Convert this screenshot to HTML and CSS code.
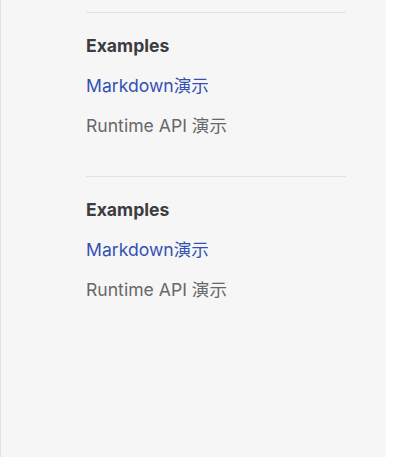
FILE: index.html
```html
<!DOCTYPE html>
<html lang="zh-CN">
<head>
  <meta charset="UTF-8" />
  <meta name="viewport" content="width=device-width, initial-scale=1.0"/>
  <title>Sidebar</title>
  <link rel="stylesheet" href="styles.css">
</head>
<body>

  <aside class="sidebar">
    <section class="group">
      <div class="group-title">Examples</div>
      <nav class="group-items">
        <a class="item active" href="#">Markdown演示</a>
        <a class="item" href="#">Runtime API 演示</a>
      </nav>
    </section>

    <section class="group">
      <div class="group-title">Examples</div>
      <nav class="group-items">
        <a class="item active" href="#">Markdown演示</a>
        <a class="item" href="#">Runtime API 演示</a>
      </nav>
    </section>
  </aside>

</body>
</html>
```

FILE: styles.css
```css
:root {
  --bg-alt: #f6f6f7;
  --divider: #e2e2e3;
  --text-1: #3c3c43;
  --text-2: #67676c;
  --brand: #3451b2;
}

* {
  box-sizing: border-box;
}

body {
  margin: 0;
  padding: 0;
  background: #fff;
  font-family: Inter, "Noto Sans CJK SC", sans-serif;
  height: 457px;
}

.sidebar {
  width: 386px;
  height: 100%;
  background: var(--bg-alt);
  border-left: 1px solid var(--divider);
  padding: 12px 40px 0 85px;
}

.group {
  border-top: 1px solid var(--divider);
  padding: 21px 0 30px;
}

.group-title {
  font-size: 17.6px;
  font-weight: 700;
  line-height: 24px;
  color: var(--text-1);
}

.group-items {
  display: flex;
  flex-direction: column;
  margin-top: 8px;
}

.item {
  font-size: 17.6px;
  line-height: 40px;
  color: var(--text-2);
  text-decoration: none;
}

.item.active {
  color: var(--brand);
}
```
